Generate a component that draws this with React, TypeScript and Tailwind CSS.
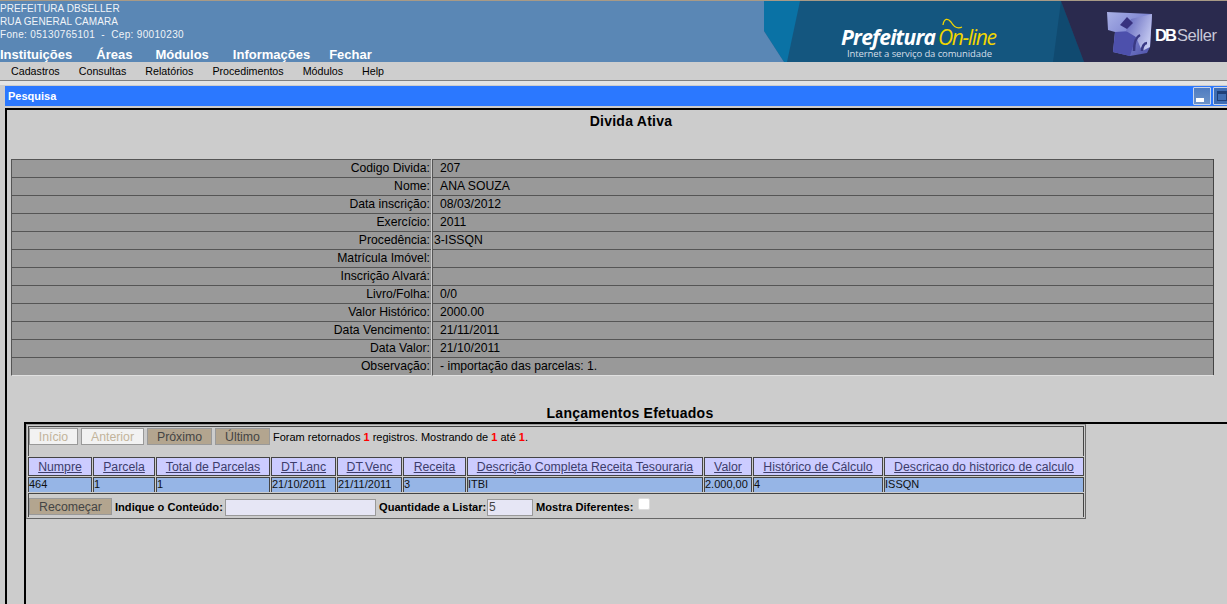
import React from "react";

const F = "font-['Liberation_Sans',Arial,sans-serif]";

const rows: [string, string][] = [
  ["Codigo Divida:", "207"],
  ["Nome:", "ANA SOUZA"],
  ["Data inscrição:", "08/03/2012"],
  ["Exercício:", "2011"],
  ["Procedência:", "3-ISSQN"],
  ["Matrícula Imóvel:", ""],
  ["Inscrição Alvará:", ""],
  ["Livro/Folha:", "0/0"],
  ["Valor Histórico:", "2000.00"],
  ["Data Vencimento:", "21/11/2011"],
  ["Data Valor:", "21/10/2011"],
  ["Observação:", "- importação das parcelas: 1."],
];

const cols = [
  ["Numpre", "464", 65],
  ["Parcela", "1", 63],
  ["Total de Parcelas", "1", 115],
  ["DT.Lanc", "21/10/2011", 66],
  ["DT.Venc", "21/11/2011", 66],
  ["Receita", "3", 64],
  ["Descrição Completa Receita Tesouraria", "ITBI", 237],
  ["Valor", "2.000,00", 49],
  ["Histórico de Cálculo", "4", 131],
  ["Descricao do historico de calculo", "ISSQN", 200],
] as const;

function Banner() {
  return (
    <svg width="463" height="61" viewBox="0 0 463 61" className="shrink-0">
      <defs>
        <linearGradient id="lg" x1="0" y1="0" x2="1" y2="1">
          <stop offset="0" stopColor="#a9b1e6" />
          <stop offset="0.5" stopColor="#7f86d2" />
          <stop offset="1" stopColor="#4a4ea6" />
        </linearGradient>
        <linearGradient id="lg2" x1="0" y1="0" x2="1" y2="0.6">
          <stop offset="0" stopColor="#5a5fb8" />
          <stop offset="1" stopColor="#c6cbf2" />
        </linearGradient>
      </defs>
      <rect width="463" height="61" fill="#14567f" />
      <polygon points="0,0 36,0 23,61 20,61 0,30" fill="#0a72a5" />
      <polygon points="0,30 20,61 0,61" fill="#5a87b5" />
      <polygon points="297,0 320,61 289,61" fill="#104a70" />
      <polygon points="297,0 463,0 463,61 320,61" fill="#2a2a4e" />
      <text x="77" y="44" fontFamily="'Open Sans',sans-serif" fontSize="21" fontWeight="700" fontStyle="italic" fill="#fff" textLength="95">Prefeitura</text>
      <text x="174" y="44" fontFamily="'Open Sans',sans-serif" fontSize="21" fontStyle="italic" fill="#f2d500" textLength="59">On-line</text>
      <path d="M179 24 C180 17 184 17 187 21 C190 26 194 28 198 26" fill="none" stroke="#f2d500" strokeWidth="1.3" />
      <text x="83" y="56" fontFamily="'Open Sans',sans-serif" fontSize="9.5" fill="#d5dfe8" textLength="145">Internet a serviço da comunidade</text>
      <polygon points="343,11 388,13 386,46 383,52 366,55 349,51 351,31 344,29" fill="url(#lg)" />
      <polygon points="351,31 367,30 372,36 366,55 349,51" fill="#4d50ac" />
      <polygon points="367,18 388,13 386,46 378,50 372,36 362,30" fill="url(#lg2)" />
      <polygon points="363,16 369,22 363,28 356,24" fill="#38327f" />
      <path d="M370 50 C370 42 372 36 376 34 M378 50 C378 46 380 42 383 42" fill="none" stroke="#3a3a85" strokeWidth="2.5" />
      <text x="391" y="40" fontFamily="'Liberation Sans',sans-serif" fontSize="16.5" fontWeight="700" fill="#fff" textLength="22">DB</text>
      <text x="413" y="40" fontFamily="'Liberation Sans',sans-serif" fontSize="16.5" fill="#c8c8d8" textLength="40">Seller</text>
    </svg>
  );
}

function NavBtn({ label, active, w }: { label: string; active?: boolean; w: string }) {
  return (
    <button
      className={`h-[17px] ${w} text-[12.3px] leading-[14px] border border-[#999] ${
        active ? "bg-[#b3a58f] text-[#444]" : "bg-[#f2f2f2] text-[#c2b49b]"
      }`}
    >
      {label}
    </button>
  );
}

export default function App() {
  return (
    <div className={`${F} relative w-[1227px] h-[604px] overflow-hidden bg-[#cccccc] text-black`}>
      {/* header */}
      <header className="h-[62px] flex justify-between bg-[#5a87b5] border-t border-[#a89a86]">
        <div className="text-white">
          <div className="text-[10px] leading-[13px] pt-[1px] text-[#f0f4f8] tracking-[0.1px]">
            <div>PREFEITURA DBSELLER</div>
            <div>RUA GENERAL CAMARA</div>
            <div className="whitespace-pre tracking-[0.33px]">Fone: 05130765101  -  Cep: 90010230</div>
          </div>
          <nav className="flex gap-[24px] text-[13px] font-bold leading-[15px] mt-[6px]">
            <span>Instituições</span>
            <span>Áreas</span>
            <span className="-ml-[1px]">Módulos</span>
            <span>Informações</span>
            <span className="-ml-[5px]">Fechar</span>
          </nav>
        </div>
        <Banner />
      </header>

      {/* menu */}
      <div className="h-[19px] flex items-center pl-[11px] gap-[19px] text-[10.7px] bg-[#cecece] border-b border-[#808080]">
        <span>Cadastros</span>
        <span>Consultas</span>
        <span>Relatórios</span>
        <span>Procedimentos</span>
        <span>Módulos</span>
        <span>Help</span>
      </div>
      <div className="h-[5px] bg-[#e4e4e4] border-b border-[#cccccc]" />

      {/* title bar */}
      <div className="ml-[5px] h-[20px] flex items-center justify-between bg-[#2b78ff] overflow-hidden">
        <span className="pl-[3px] text-[11px] font-bold text-white">Pesquisa</span>
        <div className="flex gap-[2px] mr-[-4px]">
          <div className="relative w-[18px] h-[18px] bg-gradient-to-b from-[#4f7cc0] to-[#6c93c8] border border-[#c8d4ea] rounded-[1px]">
            <div className="absolute left-[2px] bottom-[2px] w-[8px] h-[4px] bg-white" />
          </div>
          <div className="w-[18px] h-[18px] bg-[#3f6db3] border border-[#c8d4ea] rounded-[1px] p-[3px]">
            <div className="w-full h-full border border-[#1e3f78] border-t-[3px]" />
          </div>
        </div>
      </div>

      {/* window */}
      <main className="mt-[2px] ml-[5px] border-l-2 border-t-2 border-black h-[496px]">
        <h1 className="text-center text-[14px] font-bold leading-[16px] tracking-[0.25px] pt-[3px] ml-[28px]">Divida Ativa</h1>

        <div className="mt-[30px] ml-[4px] text-[12.2px] border-r border-[#444] w-[1203px]">
          {rows.map(([k, v], i) => (
            <div key={k} className="grid grid-cols-[420px_781px] gap-[1px] h-[18px]">
              <div className="bg-[#999999] border-t border-t-[#555] border-l border-l-[#555] border-b border-b-[#e0e0e0] pr-[1px] text-right leading-[17px]">
                {k}
              </div>
              <div className={`bg-[#999999] border-t border-t-[#555] border-l border-l-[#555] border-b border-b-[#e0e0e0] leading-[17px] ${i === 4 ? "pl-[1px]" : "pl-[7px]"}`}>
                {v}
              </div>
            </div>
          ))}
        </div>

        <h2 className="text-center text-[14px] font-bold leading-[16px] tracking-[0.24px] mt-[30px] ml-[26px]">Lançamentos Efetuados</h2>

        {/* lower frame */}
        <section className="mt-[1px] ml-[17px] border-l-2 border-t-2 border-black h-[190px] -mr-[1px]">
          <div className="w-[1060px] h-[95px] border border-[#666] border-t-[#999] border-l-[#999] p-[1px] flex flex-col gap-[1px]">
            <div className="h-[30px] border-t border-l border-r border-[#444] flex items-start pt-[1px] gap-[3px] shrink-0">
              <NavBtn label="Início" w="w-[49px]" />
              <NavBtn label="Anterior" w="w-[63px]" />
              <NavBtn label="Próximo" active w="w-[65px]" />
              <NavBtn label="Último" active w="w-[55px]" />
              <span className="text-[11px] leading-[19px]">
                Foram retornados <b className="text-[#f00]">1</b> registros. Mostrando de{" "}
                <b className="text-[#f00]">1</b> até <b className="text-[#f00]">1</b>.
              </span>
            </div>
            <div className="flex shrink-0">
              {cols.map(([h, , w], i) => (
                <div
                  key={h}
                  style={{ width: i === cols.length - 1 ? w : w - 1 }}
                  className="h-[19px] shrink-0 border border-[#444] last:mr-0 mr-[1px] bg-[#ccccff] text-center text-[12.3px] leading-[19px] text-[#3d3d6b] underline whitespace-nowrap"
                >
                  {h}
                </div>
              ))}
            </div>
            <div className="flex shrink-0">
              {cols.map(([h, d, w], i) => (
                <div
                  key={h}
                  style={{ width: i === cols.length - 1 ? w : w - 1 }}
                  className="h-[15px] shrink-0 border-t border-l border-r border-[#444] last:mr-0 mr-[1px] bg-[#96b5e6] text-[11px] leading-[13px] text-[#111] whitespace-nowrap"
                >
                  {d}
                </div>
              ))}
            </div>
            <div className="h-[24px] border-t border-l border-r border-[#444] flex items-start pt-[4px] shrink-0">
              <button className="h-[17px] w-[83px] bg-[#b3a58f] border border-[#999] text-[12.3px] leading-[14px] text-[#444]">
                Recomeçar
              </button>
              <b className="w-[110px] text-[11.1px] leading-[18px] ml-[3px] whitespace-nowrap">Indique o Conteúdo:</b>
              <div className="w-[151px] h-[17px] bg-[#e6e6f5] border border-[#999] mt-[1px]" />
              <b className="w-[108px] text-[11.1px] leading-[18px] ml-[3px] whitespace-nowrap">Quantidade a Listar:</b>
              <div className="w-[46px] h-[17px] bg-[#e6e6f5] border border-[#999] mt-[1px] text-[12px] leading-[15px] pl-[1px] text-[#444]">5</div>
              <b className="w-[97px] text-[11.1px] leading-[18px] ml-[3px] whitespace-nowrap">Mostra Diferentes:</b>
              <div className="w-[12px] h-[12px] bg-white border border-[#ddd] rounded-[2px] ml-[5px]" />
            </div>
          </div>
        </section>
      </main>
    </div>
  );
}
